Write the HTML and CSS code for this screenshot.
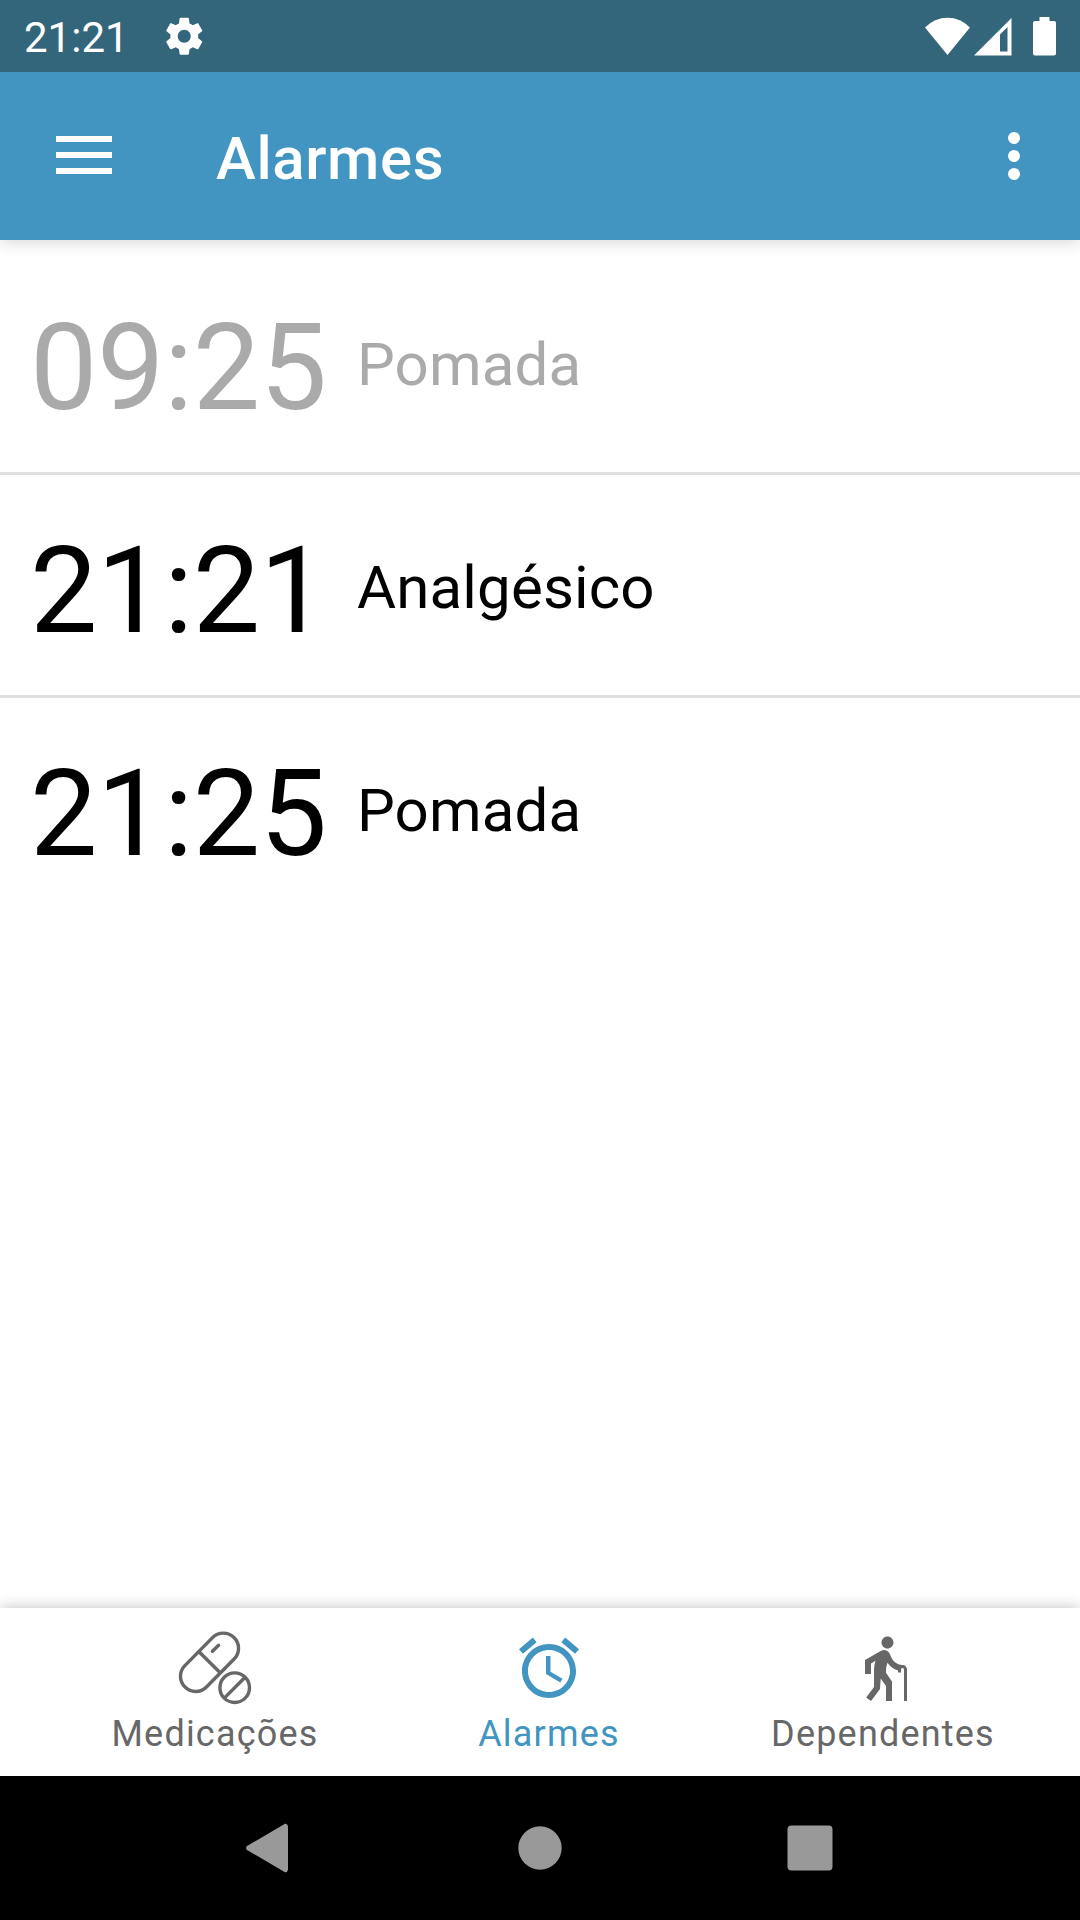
FILE: index.html
```html
<!DOCTYPE html>
<html lang="pt-BR">
<head>
<meta charset="utf-8">
<title>Alarmes</title>
<link rel="stylesheet" href="styles.css">
</head>
<body>
<div class="screen">
  <div class="status-bar">
    <span class="clock">21:21</span>
    <svg class="gear" viewBox="0 0 24 24"><path d="M19.43 12.98c.04-.32.07-.64.07-.98s-.03-.66-.07-.98l2.11-1.65c.19-.15.24-.42.12-.64l-2-3.46c-.12-.22-.39-.3-.61-.22l-2.49 1c-.52-.4-1.08-.73-1.69-.98l-.38-2.65C14.46 2.18 14.25 2 14 2h-4c-.25 0-.46.18-.49.42l-.38 2.65c-.61.25-1.17.59-1.69.98l-2.49-1c-.23-.09-.49 0-.61.22l-2 3.46c-.13.22-.07.49.12.64l2.11 1.65c-.04.32-.07.65-.07.98s.03.66.07.98l-2.11 1.65c-.19.15-.24.42-.12.64l2 3.46c.12.22.39.3.61.22l2.49-1c.52.4 1.08.73 1.69.98l.38 2.65c.03.24.24.42.49.42h4c.25 0 .46-.18.49-.42l.38-2.65c.61-.25 1.17-.59 1.69-.98l2.49 1c.23.09.49 0 .61-.22l2-3.46c.12-.22.07-.49-.12-.64l-2.11-1.65zM12 15.5c-1.93 0-3.5-1.57-3.5-3.5s1.57-3.5 3.5-3.5 3.5 1.57 3.5 3.5-1.57 3.5-3.5 3.5z"/></svg>
    <svg class="indicators" viewBox="0 0 132 40">
      <path d="M0 10.5Q9.500 .8 22.500 .8T45 10.500L22.500 38z"/>
      <path fill-rule="evenodd" d="M49 38.500 86.500 1V38.500zM75 17.500V34.500H82.500V10z"/>
      <path d="M114.500 0h10v4h4.500q2 0 2 2v30.500q0 2-2 2h-19q-2 0-2-2V6q0-2 2-2h4.500z"/>
    </svg>
  </div>
  <header class="app-bar">
    <svg class="menu" viewBox="0 0 56 38"><path d="M0 0h56v6H0zM0 16h56v6H0zM0 32h56v6H0z"/></svg>
    <h1 class="title">Alarmes</h1>
    <svg class="more" viewBox="0 0 12 48"><circle cx="6" cy="6" r="6"/><circle cx="6" cy="24" r="6"/><circle cx="6" cy="42" r="6"/></svg>
  </header>
  <main class="alarms">
    <div class="alarm past"><span class="time">09:25</span><span class="name">Pomada</span></div>
    <div class="alarm"><span class="time">21:21</span><span class="name">Analgésico</span></div>
    <div class="alarm"><span class="time">21:25</span><span class="name">Pomada</span></div>
  </main>
  <nav class="tabs">
    <div class="tab">
      <svg class="tab-icon" viewBox="0 0 72 72"><g class="outline"><rect x="-34.850" y="-15.200" width="69.700" height="30.400" rx="15.200" transform="translate(30.500 30.300) rotate(-45.300)"/><path d="M20 19.700 40.700 40.300M33.400 19.300l6.200-6M46 65.400 65.400 46"/><circle cx="55.700" cy="55.700" r="14.800"/></g></svg>
      <span class="label">Medicações</span>
    </div>
    <div class="tab active">
      <svg class="tab-icon" viewBox="0 0 24 24"><path d="M22 5.720l-4.600-3.860-1.290 1.530 4.600 3.860L22 5.720zM7.880 3.390L6.600 1.860 2 5.710l1.290 1.530 4.590-3.850zM12.500 8H11v6l4.750 2.850.75-1.230-4-2.370V8zM12 4c-4.970 0-9 4.030-9 9s4.020 9 9 9c4.970 0 9-4.030 9-9s-4.030-9-9-9zm0 16c-3.870 0-7-3.130-7-7s3.130-7 7-7 7 3.130 7 7-3.130 7-7 7z"/></svg>
      <span class="label">Alarmes</span>
    </div>
    <div class="tab">
      <svg class="tab-icon" viewBox="0 0 24 24"><path d="M13.500 5.500c1.100 0 2-.9 2-2s-.9-2-2-2-2 .9-2 2 .9 2 2 2zM20 12.500V23h-1V12.500c0-.28-.22-.5-.5-.5s-.5.220-.5.500v1h-1v-.69c-1.460-.38-2.700-1.290-3.510-2.520C13.180 11.160 13 12.070 13 13c0 .23.020.46.030.69L15 16.500V23h-2v-5l-1.780-2.540L11 19l-3 4-1.600-1.200L9 18.330V13c0-1.150.18-2.290.5-3.390L8 10.460V14H6V9.300l5.400-3.070v.01c.59-.31 1.320-.33 1.940.03.36.21.63.51.8.85l.79 1.670C15.580 10.100 16.940 11 18.500 11c.83 0 1.500.67 1.500 1.500z"/></svg>
      <span class="label">Dependentes</span>
    </div>
  </nav>
  <footer class="system-nav">
    <svg viewBox="0 0 48 48"><path d="M42 48.200Q44.500 48.600 45 45.500V2.500Q44.500-.6 42-.2L4 22Q2 24 4 26z"/></svg>
    <svg viewBox="0 0 48 48"><circle cx="25" cy="24" r="21.700"/></svg>
    <svg viewBox="0 0 48 48"><rect x="1.500" y="1.500" width="45" height="45" rx="4"/></svg>
  </footer>
</div>
</body>
</html>
```
FILE: styles.css
```css
* { box-sizing: border-box; }
body { margin: 0; background: #fff; font-family: Roboto, sans-serif; }
svg { display: block; flex: none; fill: currentColor; overflow: visible; }
.screen { width: 1080px; height: 1920px; display: flex; flex-direction: column; overflow: hidden; }

.status-bar { position: relative; z-index: 1; height: 72px; flex: none; display: flex; align-items: center; padding: 0 23px 0 24px; background: #33667b; color: #fff; }
.clock { font-size: 42px; line-height: 48px; width: 138px; margin-top: 4px; }
.gear { width: 44.500px; height: 44.500px; }
.indicators { width: 132px; height: 40px; margin-left: auto; margin-top: 1px; }

.app-bar { height: 168px; flex: none; display: flex; align-items: center; padding: 0 60px 0 56px; background: #4295c1; color: #fff; box-shadow: 0 3px 14px rgba(0, 0, 0, .15); }
.menu { width: 56px; height: 38px; margin-top: -2px; }
.title { margin: 6px 0 0 104px; font-size: 60px; font-weight: 500; line-height: 70px; letter-spacing: .600px; }
.more { width: 12px; height: 48px; margin-left: auto; }

.alarms { flex: 1; padding-top: 12px; }
.alarm { height: 223px; display: flex; align-items: flex-start; padding: 46px 30px 0; border-bottom: 3px solid #dfdfdf; color: #000; }
.alarm:last-child { border-bottom-color: transparent; }
.alarm.past { color: #aaa; }
.time { width: 327px; font-size: 120px; line-height: 140px; letter-spacing: -.400px; }
.name { margin-top: 32px; font-size: 60px; line-height: 70px; letter-spacing: .150px; }

.tabs { height: 168px; flex: none; display: flex; padding: 24px 30px 0 48px; background: #fff; color: #676767; box-shadow: 0 0 14px rgba(0, 0, 0, .25); }
.tab { flex: 1; display: flex; flex-direction: column; align-items: center; }
.tab.active { color: #4295c1; }
.tab-icon { width: 72px; height: 72px; }
.outline { fill: none; stroke: currentColor; stroke-width: 3.400; stroke-linecap: round; }
.label { margin-top: 9px; font-size: 36px; line-height: 42px; letter-spacing: 1.200px; }

.system-nav { height: 144px; flex: none; display: flex; align-items: center; justify-content: space-between; padding: 0 246px 0 243px; background: #000; color: #999; }
.system-nav svg { width: 48px; height: 48px; }
```
